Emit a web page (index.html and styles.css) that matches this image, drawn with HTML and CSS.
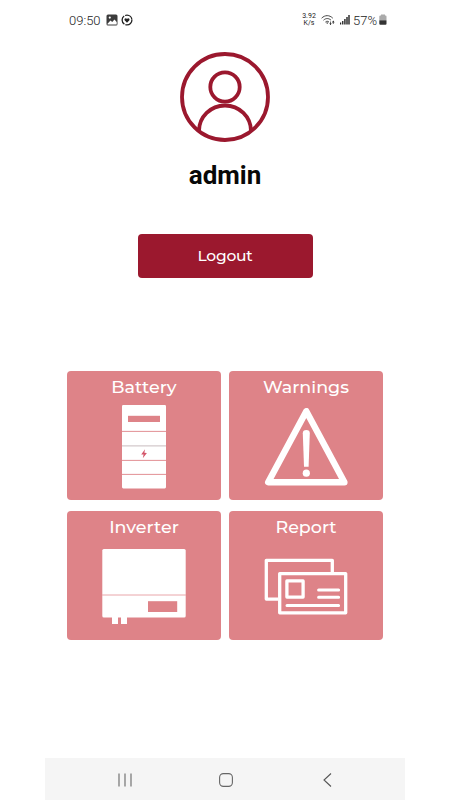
FILE: index.html
```html
<!DOCTYPE html>
<html lang="en">
<head>
    <meta charset="UTF-8">
    <meta name="viewport" content="width=device-width, initial-scale=1.0">
    <title>Account</title>
    <link rel="stylesheet" href="styles.css">
</head>
<body>
    <div class="phone">
        <header class="status-bar">
            <span class="time">09:50</span>
            <svg class="status-photo" width="12" height="12" viewBox="0 0 12 12">
                <rect x="0.5" y="0.5" width="11" height="11" rx="1.5" fill="#3c3c3c"/>
                <path d="M1.5 9.8 L4.5 6.5 L6.2 8 L8.5 5.5 L10.7 8 V10.4 H1.5Z" fill="#fff"/>
                <circle cx="3.8" cy="3.6" r="1.1" fill="#fff"/>
            </svg>
            <svg class="status-heart" width="12" height="12" viewBox="0 0 12 12">
                <circle cx="6" cy="6" r="4.9" fill="none" stroke="#222" stroke-width="1.3" stroke-dasharray="9.2 1.06"/>
                <path d="M6 8.7 L3.6 6.2 C2.9 4.6 5 3.5 6 4.9 C7 3.5 9.1 4.6 8.4 6.2Z" fill="#222"/>
            </svg>
            <div class="speed"><span>3.92</span><span>K/s</span></div>
            <svg class="wifi" width="14" height="12" viewBox="0 0 14 12" fill="none" stroke="#444" stroke-width="1">
                <path d="M0.6 4.2 C4 0.8 8.4 0.8 11.8 4.2"/>
                <path d="M2.5 6.2 C4.8 4 7.7 4 10 6.2"/>
                <path d="M4.4 8.1 C5.6 7 6.8 7 8 8.1"/>
                <path d="M5 8.5 H7.5 L6.2 10Z" fill="#333" stroke="none"/>
                <path d="M9.5 7.5 V11 M12.3 10 V7" stroke-width="0.8"/>
                <path d="M8.3 9.3 L9.5 11 L10.7 9.3Z M11 8.5 L12.3 6.6 L13.6 8.5Z" fill="#333" stroke="none"/>
            </svg>
            <svg class="signal" width="10" height="10" viewBox="0 0 10 10" fill="#222">
                <rect x="0" y="7.5" width="1.2" height="2"/>
                <rect x="2.1" y="6" width="1.3" height="3.5"/>
                <rect x="4.2" y="4" width="1.4" height="5.5"/>
                <rect x="6.3" y="2" width="1.4" height="7.5"/>
                <rect x="8.3" y="0" width="1.4" height="9.5"/>
            </svg>
            <span class="percent">57%</span>
            <svg class="level" width="8" height="12" viewBox="0 0 8 12">
                <path d="M2 1.5 V0.5 H6 V1.5 H6.5 Q7.5 1.5 7.5 2.5 V6 H0.3 V2.5 Q0.3 1.5 1.3 1.5Z" fill="#aaa"/>
                <path d="M0.3 6.2 H7.5 V9.8 Q7.5 10.8 6.5 10.8 H1.3 Q0.3 10.8 0.3 9.8Z" fill="#333"/>
            </svg>
        </header>

        <main class="content">
            <svg class="avatar" width="90" height="90" viewBox="0 0 90 90" fill="none" stroke="#9b182e" stroke-width="3.8">
                <circle cx="45" cy="45" r="43"/>
                <circle cx="45" cy="35" r="14.7"/>
                <path d="M19 79 A26 25.5 0 0 1 71 79"/>
            </svg>
            <h1 class="username">admin</h1>
            <button class="logout">Logout</button>

            <div class="menu">
                <a class="tile">
                    <span class="label">Battery</span>
                    <svg class="battery" width="44" height="84" viewBox="0 0 44 84">
                        <rect width="44" height="83.4" rx="1.3" fill="#fff"/>
                        <rect x="6" y="10.8" width="32" height="6.2" fill="#de8388"/>
                        <path d="M0 26.4 H44 M0 55.4 H44 M0 69.4 H44" stroke="#de8388" stroke-width="0.9"/>
                        <path d="M0 40.9 H44" stroke="#d3c9cb" stroke-width="1.2"/>
                        <path d="M23 44.2 L19.2 49.4 L21.6 49.6 L20.8 53.3 L24.9 48 L22.4 47.7Z" fill="#d4566a"/>
                    </svg>
                </a>
                <a class="tile">
                    <span class="label">Warnings</span>
                    <svg class="warning" width="84" height="78" viewBox="0 0 84 78">
                        <path d="M42.3 3.2 L4.2 74.3 H80.4Z" fill="none" stroke="#fff" stroke-width="6.4" stroke-linejoin="round"/>
                        <path d="M38.8 25.2 Q38.8 21.9 42.3 21.9 Q45.8 21.9 45.8 25.2 L44.6 58.8 H40Z" fill="#fff"/>
                        <circle cx="42.3" cy="65.2" r="3.6" fill="#fff"/>
                    </svg>
                </a>
                <a class="tile">
                    <span class="label">Inverter</span>
                    <svg class="inverter" width="84" height="76" viewBox="0 0 84 76">
                        <rect x="0.3" width="83.4" height="68.6" rx="1.6" fill="#fff"/>
                        <path d="M10 67 H16 V75 H10Z M19 67 H25 V75 H19Z" fill="#fff"/>
                        <path d="M0 46 H84" stroke="#e9a6aa" stroke-width="1"/>
                        <rect x="46" y="52.2" width="29.2" height="10.8" fill="#de8388"/>
                    </svg>
                </a>
                <a class="tile">
                    <span class="label">Report</span>
                    <svg class="report" width="84" height="57" viewBox="0 0 84 57" fill="none" stroke="#fff" stroke-width="3.3" stroke-linejoin="round">
                        <path d="M14 41.1 H2.3 V2.3 H68.3 V14.5"/>
                        <rect x="15.7" y="15.6" width="66" height="39.2"/>
                        <rect x="22.9" y="22.9" width="16.2" height="16.2"/>
                        <path d="M54.6 32.1 H74.6 M54.6 39.3 H74.6 M23 47.5 H74.6" stroke-linecap="round" stroke-width="3"/>
                    </svg>
                </a>
            </div>
        </main>

        <nav class="nav-bar">
            <svg width="14" height="14" viewBox="0 0 14 14" stroke="#666" stroke-width="1.1">
                <path d="M1 0.5 V13.5 M7 0.5 V13.5 M13 0.5 V13.5"/>
            </svg>
            <svg width="14" height="14" viewBox="0 0 14 14" fill="none" stroke="#666" stroke-width="1.1">
                <rect x="0.6" y="0.6" width="12.8" height="12.8" rx="3.8"/>
            </svg>
            <svg width="14" height="14" viewBox="0 0 14 14" fill="none" stroke="#555" stroke-width="1.1">
                <path d="M11 0.5 L4 7 L11 13.5"/>
            </svg>
        </nav>
    </div>
</body>
</html>
```
FILE: styles.css
```css
* {
    box-sizing: border-box;
}

body {
    margin: 0;
    background-color: #fff;
    font-family: Montserrat, Inter, sans-serif;
}

.phone {
    display: flex;
    flex-direction: column;
    width: 360px;
    height: 800px;
    margin: 0 auto;
}

/* status bar */
.status-bar {
    display: flex;
    align-items: center;
    height: 40px;
    padding: 0 18px 0 24px;
    font-family: Roboto, sans-serif;
    color: #222;
}

.time {
    width: 37px;
    font-size: 13px;
    font-weight: 300;
}

.status-heart {
    margin-left: 3px;
}

.speed {
    display: flex;
    flex-direction: column;
    align-items: center;
    width: 16px;
    margin-left: auto;
    font-size: 7px;
    line-height: 7px;
}

.wifi {
    margin-left: 4px;
}

.signal {
    margin-left: 5px;
}

.percent {
    width: 25px;
    margin-left: 3px;
    margin-right: 1px;
    font-size: 13px;
    font-weight: 300;
}

/* profile */
.content {
    display: flex;
    flex-direction: column;
    align-items: center;
    flex: 1;
    padding-top: 12px;
}

.username {
    margin: 17px 0 0;
    font-family: Roboto, sans-serif;
    font-size: 26px;
    font-weight: 700;
    line-height: 32px;
    color: #080808;
}

.logout {
    width: 175px;
    height: 44px;
    margin-top: 43px;
    padding-bottom: 2px;
    border: none;
    border-radius: 4px;
    background-color: #9b182e;
    color: #fff;
    font-family: inherit;
    font-size: 15.5px;
    font-weight: 500;
    letter-spacing: -0.2px;
}

/* menu */
.menu {
    display: grid;
    grid-template-columns: 154px 154px;
    grid-auto-rows: 129px;
    gap: 11px 8px;
    margin-top: 93px;
}

.tile {
    display: flex;
    flex-direction: column;
    align-items: center;
    padding-top: 5px;
    border-radius: 4px;
    background-color: #de8388;
    color: #fff;
}

.label {
    font-size: 17.5px;
    font-weight: 500;
    line-height: 22px;
}

.battery {
    margin-top: 7px;
}

.warning {
    margin-top: 10px;
}

.inverter {
    margin-top: 11px;
}

.report {
    margin-top: 20px;
}

/* navigation */
.nav-bar {
    display: flex;
    align-items: center;
    justify-content: space-between;
    height: 42px;
    padding: 2px 71px 0 73px;
    background-color: #f5f5f5;
}
```
